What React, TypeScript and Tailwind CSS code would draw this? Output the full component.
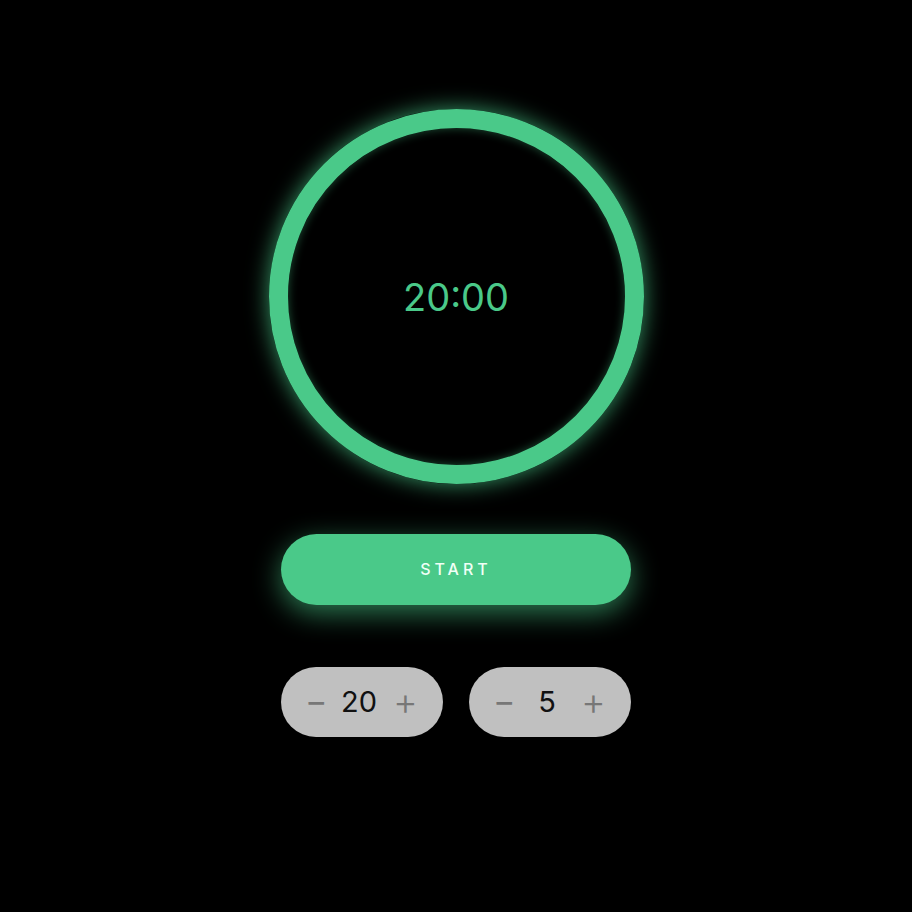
import React, { useState } from 'react';

function Stepper({ value, onDec, onInc }: { value: number; onDec: () => void; onInc: () => void }) {
  return (
    <div className="flex h-[70px] w-[162px] items-center justify-between rounded-full bg-[#c0c0c0] pb-[2px] pl-[24px] pr-[26px]">
      <button onClick={onDec} className="w-[20px] text-[34px] leading-none text-[#777]">−</button>
      <span className="text-[29px] leading-none text-[#111]">{value}</span>
      <button onClick={onInc} className="w-[24px] text-[38px] font-light leading-none text-[#777]">+</button>
    </div>
  );
}

export default function App() {
  const [work, setWork] = useState(20);
  const [rest, setRest] = useState(5);

  return (
    <div className="flex min-h-[912px] w-full flex-col items-center bg-black pt-[109px] font-['Inter',sans-serif]">
      {/* Timer ring */}
      <div className="flex h-[375px] w-[375px] items-center justify-center rounded-full border-[19px] border-[#4ac989] shadow-[0_0_22px_rgba(74,201,137,0.75),inset_0_0_10px_rgba(74,201,137,0.4)]">
        <span className="text-[38px] leading-none text-[#4ac989]">{work}:00</span>
      </div>

      <button className="mt-[50px] flex h-[71px] w-[350px] items-center justify-center rounded-full bg-[#4ac989] pb-[2px] text-[16px] font-medium tracking-[0.25em] text-[#f0fff6] shadow-[0_8px_28px_rgba(74,201,137,0.6)]">
        START
      </button>

      <div className="mt-[62px] flex gap-[26px]">
        <Stepper value={work} onDec={() => setWork(Math.max(1, work - 1))} onInc={() => setWork(work + 1)} />
        <Stepper value={rest} onDec={() => setRest(Math.max(1, rest - 1))} onInc={() => setRest(rest + 1)} />
      </div>
    </div>
  );
}
